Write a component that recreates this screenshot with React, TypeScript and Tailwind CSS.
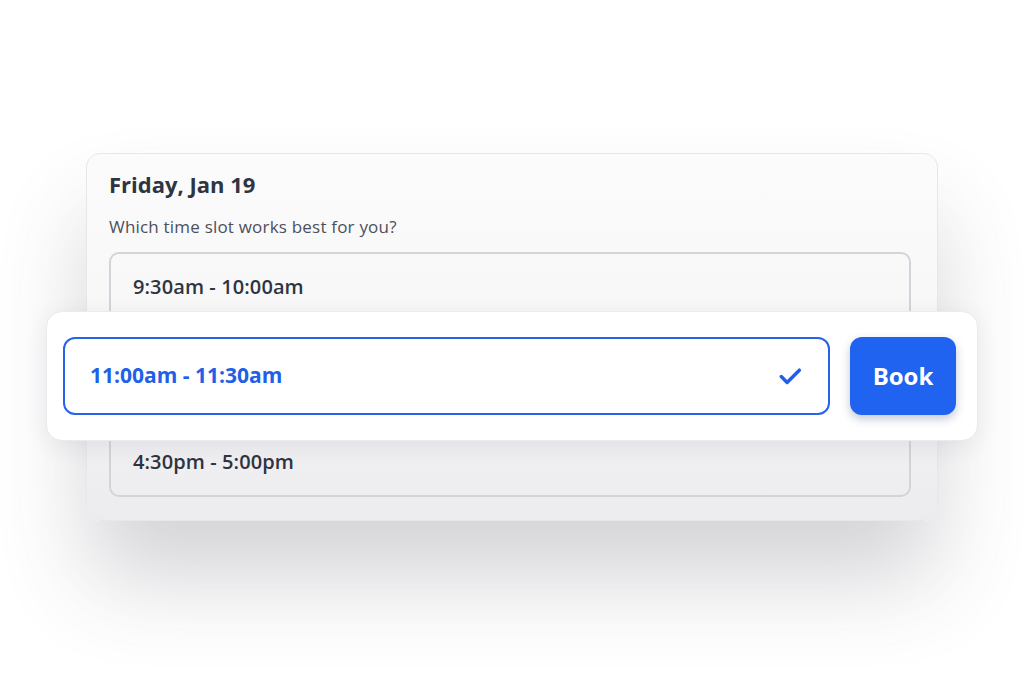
import React from "react";

const font = { fontFamily: '"Open Sans", "Liberation Sans", sans-serif' };

const Slot = ({ label }: { label: string }) => (
  <div className="flex h-[66px] items-center px-[22px] text-[20px] font-semibold tracking-[0.1px] text-[#2f3441]">{label}</div>
);

const App = () => {
  return (
    <div className="min-h-[676px] w-full overflow-hidden bg-white pl-[86px] pt-[153px]" style={font}>
      <div className="w-[852px] rounded-[14px] border border-[#e7e7ea] bg-gradient-to-b from-[#fbfbfc] via-[#f7f7f8] to-[#ecebee] pb-[23px] pl-[22px] pr-[26px] pt-[15px] shadow-[0_60px_90px_-4px_rgba(70,65,85,0.24)]">
        <h1 className="text-[22px] font-bold leading-[30px] text-[#2f3441]">Friday, Jan 19</h1>
        <p className="mt-[16px] text-[17px] tracking-[0.2px] leading-[24px] text-[#4b505c]">Which time slot works best for you?</p>
        <div className="relative mt-[13px] rounded-[10px] border-2 border-[#d3d4da]">
          <Slot label="9:30am - 10:00am" />
          <div className="h-[109px]" />
          <Slot label="4:30pm - 5:00pm" />

          <div className="absolute left-[-65px] right-[-69px] top-[57px] flex h-[130px] items-center gap-[20px] rounded-[16px] border border-[#ebebee] bg-white pl-[16px] pr-[21px] shadow-[0_6px_24px_rgba(40,40,60,0.08)]">
            <div className="flex h-[78px] flex-1 items-center justify-between rounded-[12px] border-2 border-[#2563eb] pl-[25px] pr-[24px]">
              <span className="text-[21px] font-bold text-[#2160e6]">11:00am - 11:30am</span>
              <svg width="28" height="28" viewBox="0 0 24 24" fill="none" stroke="#2160e6" strokeWidth="3" strokeLinecap="round" strokeLinejoin="round">
                <path d="M4.5 12.5l5 5L20 7" />
              </svg>
            </div>
            <button className="flex h-[78px] w-[106px] items-center justify-center rounded-[12px] bg-[#1f63f0] text-[24px] font-bold text-white shadow-[0_4px_10px_rgba(20,40,90,0.25)]">
              Book
            </button>
          </div>
        </div>
      </div>
    </div>
  );
};

export default App;
